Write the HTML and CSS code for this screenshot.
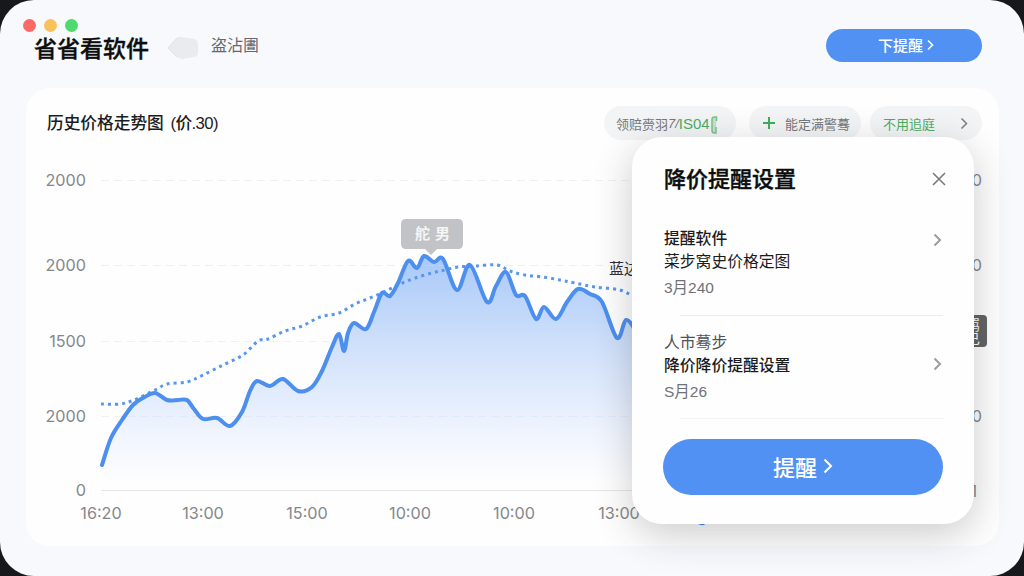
FILE: index.html
```
<!DOCTYPE html>
<html lang="zh-CN">
<head>
  <meta charset="UTF-8" />
  <title>省省看软件</title>
  <meta name="viewport" content="width=device-width, initial-scale=1.0" />
  <link rel="stylesheet" href="styles.css">
</head>
<body>
  <div class="window">

    <header class="topbar">
      <div class="brand">
        <div class="dots">
          <span class="dot red"></span>
          <span class="dot yellow"></span>
          <span class="dot green"></span>
        </div>
        <h1>省省看软件</h1>
      </div>
      <svg class="tag-icon" width="32" height="24" viewBox="0 0 32 24">
        <path d="M1 12 L10 2 Q12 0 14 1 L27 3 Q31 4 31 8 V17 Q31 20 27 21 L16 23 Q12 23 10 21 Z" fill="#e9ebef"/>
        <path d="M10 2 L1 12 L10 21" fill="none" stroke="#dfe1e5"/>
      </svg>
      <span class="subtitle">盗沾圕</span>
      <button class="btn btn-small">下提醒
        <svg width="7" height="12" viewBox="0 0 7 12"><path d="M1 1.5 L5.5 6 L1 10.5"/></svg>
      </button>
    </header>

    <section class="card">
      <div class="card-head">
        <h2>历史价格走势图 <span class="unit">(价.30)</span></h2>
        <div class="pills">
          <div class="pill pill-a">领赔赍羽<span class="slash">7/</span><span class="green-text code">IS04</span>
            <svg width="8" height="20" viewBox="0 0 8 20"><path d="M6.500 6 V2 H4 Q2 2 2 5 V15 Q2 18 4 18 H6 V12" fill="#c4e2cb" stroke="#7fbf8e" stroke-width="1.500"/></svg>
          </div>
          <div class="pill pill-b">
            <svg width="14" height="14" viewBox="0 0 14 14"><path d="M7 1 V13 M1 7 H13" stroke="#3fae5a" stroke-width="2"/></svg>
            <span>能定满警蓦</span>
          </div>
          <div class="pill pill-c">
            <span class="green-text">不用追庭</span>
            <svg width="8" height="13" viewBox="0 0 8 13"><path d="M1.500 1.500 L6.500 6.500 L1.500 11.500" fill="none" stroke="#7d7f83" stroke-width="1.500"/></svg>
          </div>
        </div>
      </div>

      <svg class="chart" width="973" height="388" viewBox="26 158 973 388">
        <defs>
          <linearGradient id="areaFill" gradientUnits="userSpaceOnUse" x1="0" y1="255" x2="0" y2="482">
            <stop offset="0" stop-color="#a8c8f8"/>
            <stop offset="0.4" stop-color="#d0e1fb"/>
            <stop offset="0.8" stop-color="#f1f5fe"/>
            <stop offset="1" stop-color="#fefefe"/>
          </linearGradient>
        </defs>
        <path id="area" fill="url(#areaFill)"/>
        <g class="grid">
          <path d="M101 180.500 H960"/>
          <path d="M101 265.500 H960"/>
          <path d="M101 341.500 H960"/>
          <path d="M101 416.500 H960"/>
          <path class="base" d="M101 490.500 H960"/>
        </g>
        <path id="average" class="average"/>
        <path id="price" class="price"/>

        <g class="axis axis-y">
          <text x="86" y="186">2000</text>
          <text x="86" y="271">2000</text>
          <text x="86" y="347">1500</text>
          <text x="86" y="422">2000</text>
          <text x="86" y="496">0</text>
          <text x="982" y="186">2000</text>
          <text x="982" y="271">2000</text>
          <text x="982" y="422">2000</text>
          <text x="977" y="497">1</text>
        </g>
        <g class="axis axis-x">
          <text x="101" y="519">16:20</text>
          <text x="203" y="519">13:00</text>
          <text x="307" y="519">15:00</text>
          <text x="410" y="519">10:00</text>
          <text x="514" y="519">10:00</text>
          <text x="619" y="519">13:00</text>
        </g>

        <path d="M406 219 H458 Q463 219 463 224 V244 Q463 249 458 249 H437 L431 255 L425 249 H406 Q401 249 401 244 V224 Q401 219 406 219 Z" fill="#c2c3c6"/>
        <text class="tip-text" x="415" y="239">舵</text>
        <text class="tip-text" x="435" y="239">男</text>

        <text class="note" x="609" y="274">蓝边</text>
        <rect x="955" y="315" width="32" height="32" rx="4" fill="#626365"/>
        <text class="tag-text" x="966" y="330">羁</text>
        <text class="tag-text" x="966" y="344">已</text>
        <path d="M698 523 q5 3 8 -1" fill="none" stroke="#4a8cf0" stroke-width="2"/>
      </svg>
    </section>

    <div class="modal">
      <div class="modal-head">
        <h3>降价提醒设置</h3>
        <svg width="14" height="14" viewBox="0 0 14 14"><path d="M1 1 L13 13 M13 1 L1 13" stroke="#77797d" stroke-width="1.600"/></svg>
      </div>
      <div class="item item-first">
        <div>
          <p class="strong">提醒软件</p>
          <p>菜步窝史价格定图</p>
          <p class="date">3月240</p>
        </div>
        <svg class="chev" width="9" height="14" viewBox="0 0 9 14"><path d="M1.500 1.500 L7 7 L1.500 12.500"/></svg>
      </div>
      <div class="divider"></div>
      <div class="item item-second">
        <div>
          <p class="muted">人市蓦步</p>
          <p class="strong">降价降价提醒设置</p>
          <p class="date">S月26</p>
        </div>
        <svg class="chev" width="9" height="14" viewBox="0 0 9 14"><path d="M1.500 1.500 L7 7 L1.500 12.500"/></svg>
      </div>
      <div class="divider faint"></div>
      <button class="btn btn-large">提醒
        <svg width="10" height="16" viewBox="0 0 10 16"><path d="M1.500 1.500 L8 8 L1.500 14.500"/></svg>
      </button>
    </div>

  </div>

  <script>
    const price = [
      [102,465],[111,438],[122,420],[133,405],[143,398],[155,393],[167,400],[178,400],[187,400],
      [194,409],[203,419],[217,418],[230,426],[242,412],[250,391],[257,381],[270,386],[283,379],
      [298,391],[312,387],[322,371],[332,347],[339,334],[344,351],[348,333],[354,323],[366,329],
      [374,312],[382,293],[390,296],[398,283],[408,261],[417,268],[424,256],[434,262],[443,259],
      [457,290],[470,265],[487,302],[496,286],[506,272],[516,295],[525,296],[536,319],[544,307],
      [556,319],[567,302],[578,289],[590,294],[602,302],[617,338],[626,320],[636,331]
    ];
    const average = [
      [101,404],[120,404],[134,400],[155,390],[167,384],[187,382],[203,375],[223,365],[243,355],
      [258,341],[268,339],[285,331],[302,326],[320,317],[339,313],[355,304],[370,298],[386,291],
      [400,284],[415,278],[432,273],[445,270],[458,267],[475,266],[497,265],[510,271],[525,275],
      [543,277],[560,280],[575,283],[595,287],[620,290],[636,298]
    ];

    // smooth curve through all points
    function curve(pts) {
      let d = `M${pts[0]}`;
      for (let i = 0; i < pts.length - 1; i++) {
        const a = pts[i - 1] || pts[i], b = pts[i], c = pts[i + 1], e = pts[i + 2] || c;
        d += ` C${b[0] + (c[0] - a[0]) / 6},${b[1] + (c[1] - a[1]) / 6}`;
        d += ` ${c[0] - (e[0] - b[0]) / 6},${c[1] - (e[1] - b[1]) / 6} ${c}`;
      }
      return d;
    }

    document.getElementById('price').setAttribute('d', curve(price));
    document.getElementById('average').setAttribute('d', curve(average));
    document.getElementById('area').setAttribute('d', curve(price) + ' V490 H102 Z');
  </script>
</body>
</html>
```
FILE: styles.css
```
* {
  box-sizing: border-box;
}

body {
  margin: 0;
  background: #17181b;
  font-family: 'Liberation Sans', 'Noto Sans CJK SC', sans-serif;
  color: #1b1c1e;
  overflow: hidden;
}

h1, h2, h3, p {
  margin: 0;
  font-weight: 500;
}

svg {
  flex: none;
}

.window {
  position: relative;
  width: 1024px;
  height: 576px;
  padding: 0 25px 0 26px;
  border-radius: 34px;
  background: #f7f9fd;
  overflow: hidden;
}

.topbar {
  display: flex;
  align-items: flex-start;
  height: 88px;
}

.brand {
  width: 141px;
  padding-top: 19px;
}

.dots {
  display: flex;
  gap: 8px;
  margin-left: -3px;
}

.dot {
  width: 13px;
  height: 13px;
  border-radius: 50%;
}

.red {
  background: #fb6a67;
}

.yellow {
  background: #f8c159;
}

.green {
  background: #4fd970;
}

.brand h1 {
  padding-left: 8px;
  font-family: 'Noto Sans CJK SC', sans-serif;
  font-size: 23px;
  line-height: 31px;
  color: #0c0d0e;
  -webkit-text-stroke: 0.4px #0c0d0e;
  white-space: nowrap;
}

.tag-icon {
  margin-top: 36px;
}

.subtitle {
  margin: 35px auto 0 12px;
  font-size: 16px;
  line-height: 22px;
  color: #66686c;
}

.btn {
  display: flex;
  align-items: center;
  justify-content: center;
  border: none;
  background: #5291f4;
  color: white;
  font-family: 'Noto Sans CJK SC', sans-serif;
}

.btn path {
  fill: none;
  stroke: white;
  stroke-width: 1.6;
}

.btn-small {
  gap: 4px;
  width: 156px;
  height: 33px;
  margin: 29px 17px 0 0;
  padding: 0 4px 2px 8px;
  border-radius: 17px;
  font-size: 15px;
  font-weight: 500;
}

.card {
  height: 458px;
  border-radius: 24px;
  background: #fefefe;
  overflow: hidden;
}

.card-head {
  display: flex;
  justify-content: space-between;
  height: 70px;
  padding: 18px 17px 0 21px;
}

.card-head h2 {
  font-size: 16.7px;
  line-height: 36px;
}

.unit {
  margin-left: 2px;
  letter-spacing: -0.6px;
}

.pills {
  display: flex;
}

.pill {
  display: flex;
  align-items: center;
  height: 34px;
  border-radius: 17px;
  background: #f3f4f5;
  color: #76787c;
  font-size: 13px;
  white-space: nowrap;
}

.pill-a {
  width: 132px;
  margin-right: 13px;
  padding-left: 12px;
}

.pill-a svg {
  margin-top: 3px;
}

.slash {
  font-style: italic;
}

.code {
  font-size: 15px;
}

.pill-b {
  gap: 9px;
  width: 112px;
  margin-right: 9px;
  padding-left: 13px;
}

.pill-c {
  justify-content: space-between;
  width: 112px;
  padding: 0 14px 0 13px;
}

.green-text {
  color: #4cae62;
}

.chart {
  display: block;
}

.grid path {
  stroke: #d9dbe0;
  stroke-opacity: 0.4;
  stroke-dasharray: 8 5;
}

.grid .base {
  stroke-opacity: 0.7;
  stroke-dasharray: none;
}

.price {
  fill: none;
  stroke: #4c8fee;
  stroke-width: 4;
  stroke-linecap: round;
  stroke-linejoin: round;
}

.average {
  fill: none;
  stroke: #5897ee;
  stroke-width: 3;
  stroke-dasharray: 3 4;
}

.axis text {
  font-family: Inter, 'Liberation Sans', sans-serif;
  font-size: 16.2px;
  fill: #85878b;
}

.axis-y text {
  text-anchor: end;
}

.axis-x text {
  text-anchor: middle;
}

.tip-text {
  font-size: 15px;
  font-weight: bold;
  fill: #f5f5f6;
}

.note {
  font-size: 15px;
  fill: #2c2d30;
}

.tag-text {
  font-size: 14px;
  fill: white;
}

/* floating reminder panel */
.modal {
  position: absolute;
  left: 632px;
  top: 137px;
  width: 342px;
  height: 387px;
  padding: 23px 31px 0 32px;
  border-radius: 30px;
  background: #fefefe;
  box-shadow: 0 10px 38px rgba(40, 42, 46, 0.24);
}

.modal-head {
  display: flex;
  align-items: center;
  justify-content: space-between;
  height: 34px;
}

.modal-head svg {
  margin: 3px -3px 0 0;
}

.modal-head h3 {
  font-family: 'Noto Sans CJK SC', sans-serif;
  font-size: 22px;
  color: #0c0d0e;
  -webkit-text-stroke: 0.4px #0c0d0e;
}

.item {
  display: flex;
  justify-content: space-between;
  font-size: 15.8px;
  line-height: 23px;
}

.item p {
  font-weight: 400;
}

.item .strong {
  font-weight: 500;
}

.item .muted {
  color: #505256;
}

.item .date {
  padding-top: 3px;
  font-size: 15.5px;
  color: #707276;
}

.item-first {
  height: 121px;
  padding-top: 33px;
}

.item-second {
  height: 102px;
  padding-top: 15px;
}

.divider {
  height: 1px;
  margin-left: 16px;
  background: #ebebec;
}

.divider.faint {
  background: #f3f3f4;
}

.chev {
  margin: 6px 1px 0 0;
}

.item-second .chev {
  margin-top: 26px;
}

.chev path {
  fill: none;
  stroke: #9b9da0;
  stroke-width: 2;
}

.btn-large {
  gap: 6px;
  width: 280px;
  height: 56px;
  margin: 20px 0 0 -1px;
  padding-bottom: 3px;
  border-radius: 28px;
  font-size: 22px;
  font-weight: 500;
}

.btn-large path {
  stroke-width: 2;
}
```
